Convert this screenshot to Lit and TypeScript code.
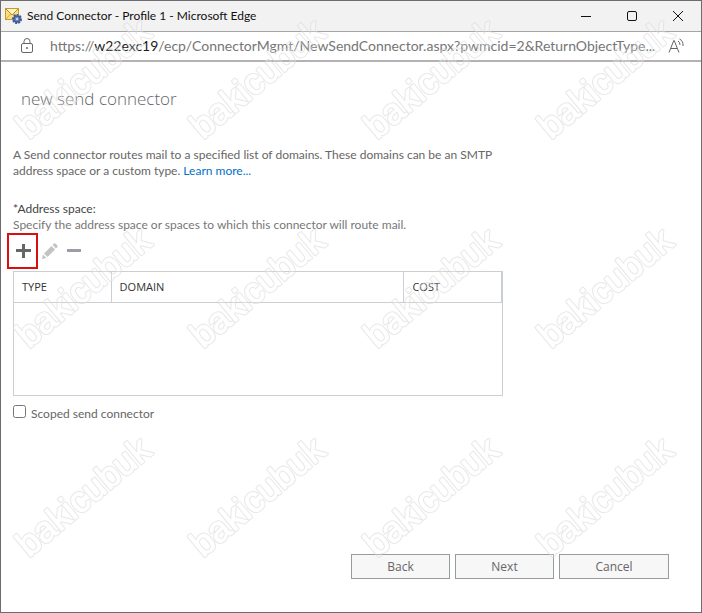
import { LitElement, html, css } from "lit";
import { customElement, state } from "lit/decorators.js";

@customElement("app-watermark")
export class AppWatermark extends LitElement {
  static styles = css`
    :host {
      position: absolute;
      inset: 0;
      pointer-events: none;
    }
    .sheet {
      display: block;
      width: 100%;
      height: 100%;
    }
    .mark {
      font: 36px "Liberation Sans", Arial, sans-serif;
      stroke-linejoin: round;
    }
    .edge {
      fill: #ffffff;
      stroke: #ffffff;
      stroke-width: 3px;
    }
    .hollow {
      fill: #000000;
      stroke: #000000;
      stroke-width: 1px;
    }
    .body {
      fill: #ffffff;
      stroke: #ffffff;
      stroke-width: 1px;
      opacity: 0.2;
    }
  `;

  render() {
    return html`<svg class="sheet" aria-hidden="true">
      <defs>
        <mask id="outline" maskUnits="userSpaceOnUse" x="-10" y="-40" width="190" height="60">
          <text class="mark edge">bakicubuk</text>
          <text class="mark hollow">bakicubuk</text>
        </mask>
        <pattern id="tile" width="174" height="209" patternUnits="userSpaceOnUse">
          <g transform="translate(28 139) rotate(-40)">
            <text class="mark body">bakicubuk</text>
            <rect x="-10" y="-40" width="190" height="60" fill="#dcdcdc" fill-opacity="0.65" mask="url(#outline)"></rect>
          </g>
        </pattern>
      </defs>
      <rect width="100%" height="100%" fill="url(#tile)"></rect>
    </svg>`;
  }
}

@customElement("app-root")
export class AppRoot extends LitElement {
  static styles = css`
    :host {
      display: block;
      font: 12px/16px Lato, "Open Sans", sans-serif;
      color: #666666;
    }
    * {
      box-sizing: border-box;
    }
    button {
      font: inherit;
      color: inherit;
      background: none;
      border: 0;
      padding: 0;
    }
    svg {
      display: block;
    }
    .window {
      position: relative;
      display: flex;
      flex-direction: column;
      min-height: 100vh;
      border: 1px solid #6e6c6e;
      background: #ffffff;
    }
    .titlebar {
      display: flex;
      align-items: center;
      height: 31px;
      padding-left: 4px;
      background: #f2f2f2;
      border-bottom: 1px solid #a5a5a5;
      color: #111111;
    }
    .title {
      flex: 1;
      margin: 0 0 0 5px;
      font-size: 12px;
      font-weight: 400;
      white-space: nowrap;
    }
    .caption {
      display: grid;
      place-items: center;
      width: 46px;
      height: 30px;
    }
    .address {
      display: flex;
      align-items: center;
      height: 30px;
      padding: 0 16px 0 18px;
      border-bottom: 2px solid #b4b2b4;
      color: #767676;
    }
    .url {
      flex: 1;
      min-width: 0;
      margin: 0 8px 0 15px;
      font-size: 14px;
      line-height: 20px;
      overflow: hidden;
      white-space: nowrap;
      text-overflow: ellipsis;
    }
    .host {
      color: #1a1a1a;
    }
    .page {
      flex: 1;
      display: flex;
      flex-direction: column;
      padding: 24px 32px 33px 12px;
    }
    .heading {
      margin: 0 0 35px 8px;
      font-family: "Open Sans", sans-serif;
      font-size: 17px;
      line-height: 26px;
      font-weight: 300;
    }
    .text {
      max-width: 490px;
      margin: 0;
    }
    .intro {
      margin-bottom: 22px;
    }
    .link {
      color: #0072c6;
      text-decoration: none;
    }
    .label {
      color: #444444;
    }
    .hint {
      color: #777777;
      white-space: nowrap;
    }
    .tools {
      display: flex;
      align-items: center;
      margin: 0 0 2px -6px;
    }
    .tool {
      display: grid;
      place-items: center;
      width: 24px;
      height: 36px;
    }
    .add {
      width: 31px;
      border: 2px solid #d8100f;
    }
    .list {
      width: 490px;
      max-width: 100%;
      height: 125px;
      border: 1px solid #c9cfd2;
    }
    .grid {
      width: 100%;
      table-layout: fixed;
      border-collapse: separate;
      border-spacing: 0;
    }
    .cell {
      height: 31px;
      padding: 0 8px;
      border-right: 1px solid #c9cfd2;
      border-bottom: 1px solid #c9cfd2;
      font-family: "Open Sans", sans-serif;
      font-size: 11px;
      font-weight: 400;
      text-align: left;
      color: #333333;
    }
    .narrow {
      width: 20%;
    }
    .scope {
      display: flex;
      align-items: center;
      gap: 5px;
      margin-top: 9px;
    }
    .check {
      width: 13px;
      height: 13px;
      margin: 0 0 4px;
    }
    .actions {
      display: flex;
      justify-content: flex-end;
      gap: 5px;
      margin-top: auto;
    }
    .action {
      width: 99px;
      height: 25px;
      border: 1px solid #979c9e;
      background: #f7f7f7;
      font-family: "Open Sans", sans-serif;
      font-size: 12px;
    }
    .wide {
      width: 110px;
    }
  `;

  @state() private scoped = false;

  private columns = [
    { name: "TYPE", narrow: true },
    { name: "DOMAIN", narrow: false },
    { name: "COST", narrow: true },
  ];

  render() {
    return html`<div class="window">
      <header class="titlebar">
        <svg width="17" height="16" viewBox="0 0 17 16" aria-hidden="true">
          <rect x="0.5" y="0.5" width="13" height="11" fill="#f8df83" stroke="#c59a32" />
          <path d="M1 11 5.500 6M13 11 8.500 6" stroke="#d5aa45" fill="none" />
          <path d="M1 1 7 7 13 1" stroke="#b98a28" fill="#fff4bf" />
          <g stroke="#40568f">
            <circle cx="12" cy="11" r="4" fill="#7f9ad0" stroke-width="2" stroke-dasharray="2 1" />
            <circle cx="12" cy="11" r="3" fill="#6683c2" />
            <circle cx="12" cy="11" r="1" fill="#e5ecf8" stroke="none" />
          </g>
        </svg>
        <h1 class="title">Send Connector - Profile 1 - Microsoft Edge</h1>
        <button class="caption" aria-label="Minimize">
          <svg width="12" height="12" stroke="#111"><path d="M1 6.500H11" /></svg>
        </button>
        <button class="caption" aria-label="Maximize">
          <svg width="12" height="12" stroke="#111" fill="none">
            <rect x="1.500" y="1.500" width="9" height="9" rx="1.500" />
          </svg>
        </button>
        <button class="caption" aria-label="Close">
          <svg width="12" height="12" stroke="#111"><path d="M1 1 11 11M11 1 1 11" /></svg>
        </button>
      </header>
      <div class="address">
        <svg width="16" height="18" viewBox="0 0 16 18" fill="none" stroke="#666" aria-hidden="true">
          <rect x="2.500" y="6.500" width="11" height="9" rx="1.500" />
          <path d="M5 6.500V4.500A3 3 0 0 1 11 4.500V6.500" />
          <circle cx="8" cy="11" r="1" fill="#666" stroke="none" />
        </svg>
        <div class="url">https://<span class="host">w22exc19</span>/ecp/ConnectorMgmt/NewSendConnector.aspx?pwmcid=2&amp;ReturnObjectType...</div>
        <button aria-label="Read aloud">
          <svg width="17" height="18" viewBox="0 0 17 18" fill="none" stroke="#666">
            <path d="M1 15.500 5.800 3.500H6.200L11 15.500M2.800 11.500H9.200M10 4Q12 5 12 8M11.500 2Q15.500 4 15 9" />
          </svg>
        </button>
      </div>
      <main class="page">
        <h2 class="heading">new send connector</h2>
        <p class="text intro">
          A Send connector routes mail to a specified list of domains. These domains can be an SMTP
          address space or a custom type. <a class="link" href="#">Learn more...</a>
        </p>
        <p class="text label">*Address space:</p>
        <p class="text hint">Specify the address space or spaces to which this connector will route mail.</p>
        <div class="tools">
          <button class="tool add" aria-label="Add">
            <svg width="16" height="16" stroke="#666" stroke-width="3"><path d="M8.500 1V15M1 7.500H16" /></svg>
          </button>
          <button class="tool" aria-label="Edit">
            <svg width="18" height="18" viewBox="0 0 18 18" fill="#c3c3c3">
              <path d="M1 17 2 12.500 5.500 16ZM3 11.500 10.500 4 14 7.500 6.500 15ZM11.500 3 13 1.500Q14 1 15 2L16 3Q17 4 16.500 5L15 6.500Z" />
            </svg>
          </button>
          <button class="tool" aria-label="Remove">
            <svg width="14" height="14" stroke="#9b9ea6" stroke-width="3"><path d="M0 6.500H14" /></svg>
          </button>
        </div>
        <div class="list">
          <table class="grid" aria-label="Address space">
            <thead>
              <tr>
                ${this.columns.map(
                  (c) => html`<th class="cell ${c.narrow ? "narrow" : ""}" scope="col">${c.name}</th>`
                )}
              </tr>
            </thead>
          </table>
        </div>
        <div class="scope">
          <input
            class="check"
            id="scoped"
            type="checkbox"
            .checked=${this.scoped}
            @change=${(e: Event) => (this.scoped = (e.target as HTMLInputElement).checked)}
          />
          <label for="scoped">Scoped send connector</label>
        </div>
        <div class="actions">
          <button class="action">Back</button>
          <button class="action">Next</button>
          <button class="action wide">Cancel</button>
        </div>
      </main>
      <app-watermark></app-watermark>
    </div>`;
  }
}
